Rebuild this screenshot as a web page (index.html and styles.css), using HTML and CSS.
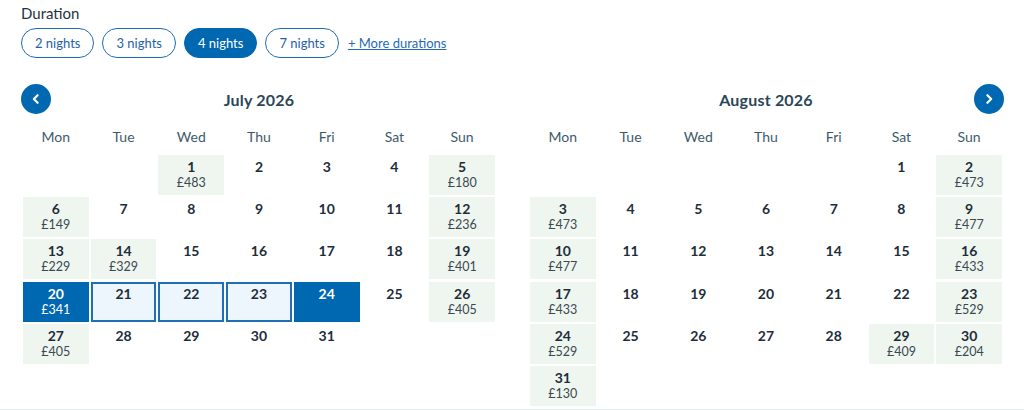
FILE: index.html
```html
<!DOCTYPE html>
<html lang="en">
<head>
<meta charset="utf-8">
<link rel="stylesheet" href="styles.css">
</head>
<body>
<div class="page">
  <section class="duration">
    <div class="label">Duration</div>
    <div class="pills">
      <button class="pill">2 nights</button>
      <button class="pill">3 nights</button>
      <button class="pill active">4 nights</button>
      <button class="pill">7 nights</button>
      <a class="more" href="#">+ More durations</a>
    </div>
  </section>

  <section class="calendars">
    <div class="month">
      <div class="month-head">
        <button class="nav prev" aria-label="Previous month"><svg width="12" height="12" viewBox="0 0 12 12"><path d="M7.6 2.2 L3.8 6 L7.6 9.8" fill="none" stroke="#fff" stroke-width="2.2" stroke-linecap="round" stroke-linejoin="round"/></svg></button>
        <h2 class="title">July 2026</h2>
        <span class="nav-space"></span>
      </div>
      <div class="weekdays"><span>Mon</span><span>Tue</span><span>Wed</span><span>Thu</span><span>Fri</span><span>Sat</span><span>Sun</span></div>
      <div class="grid">
        <div class="cell blank"></div><div class="cell blank"></div>
        <div class="cell price"><b>1</b><i>£483</i></div>
        <div class="cell"><b>2</b></div>
        <div class="cell"><b>3</b></div>
        <div class="cell"><b>4</b></div>
        <div class="cell price"><b>5</b><i>£180</i></div>

        <div class="cell price"><b>6</b><i>£149</i></div>
        <div class="cell"><b>7</b></div>
        <div class="cell"><b>8</b></div>
        <div class="cell"><b>9</b></div>
        <div class="cell"><b>10</b></div>
        <div class="cell"><b>11</b></div>
        <div class="cell price"><b>12</b><i>£236</i></div>

        <div class="cell price"><b>13</b><i>£229</i></div>
        <div class="cell price"><b>14</b><i>£329</i></div>
        <div class="cell"><b>15</b></div>
        <div class="cell"><b>16</b></div>
        <div class="cell"><b>17</b></div>
        <div class="cell"><b>18</b></div>
        <div class="cell price"><b>19</b><i>£401</i></div>

        <div class="cell selected"><b>20</b><i>£341</i></div>
        <div class="cell range"><b>21</b></div>
        <div class="cell range"><b>22</b></div>
        <div class="cell range"><b>23</b></div>
        <div class="cell selected"><b>24</b></div>
        <div class="cell"><b>25</b></div>
        <div class="cell price"><b>26</b><i>£405</i></div>

        <div class="cell price"><b>27</b><i>£405</i></div>
        <div class="cell"><b>28</b></div>
        <div class="cell"><b>29</b></div>
        <div class="cell"><b>30</b></div>
        <div class="cell"><b>31</b></div>
      </div>
    </div>

    <div class="month">
      <div class="month-head">
        <span class="nav-space"></span>
        <h2 class="title">August 2026</h2>
        <button class="nav next" aria-label="Next month"><svg width="12" height="12" viewBox="0 0 12 12"><path d="M4.4 2.2 L8.2 6 L4.4 9.8" fill="none" stroke="#fff" stroke-width="2.2" stroke-linecap="round" stroke-linejoin="round"/></svg></button>
      </div>
      <div class="weekdays"><span>Mon</span><span>Tue</span><span>Wed</span><span>Thu</span><span>Fri</span><span>Sat</span><span>Sun</span></div>
      <div class="grid">
        <div class="cell blank"></div><div class="cell blank"></div><div class="cell blank"></div><div class="cell blank"></div><div class="cell blank"></div>
        <div class="cell"><b>1</b></div>
        <div class="cell price"><b>2</b><i>£473</i></div>

        <div class="cell price"><b>3</b><i>£473</i></div>
        <div class="cell"><b>4</b></div>
        <div class="cell"><b>5</b></div>
        <div class="cell"><b>6</b></div>
        <div class="cell"><b>7</b></div>
        <div class="cell"><b>8</b></div>
        <div class="cell price"><b>9</b><i>£477</i></div>

        <div class="cell price"><b>10</b><i>£477</i></div>
        <div class="cell"><b>11</b></div>
        <div class="cell"><b>12</b></div>
        <div class="cell"><b>13</b></div>
        <div class="cell"><b>14</b></div>
        <div class="cell"><b>15</b></div>
        <div class="cell price"><b>16</b><i>£433</i></div>

        <div class="cell price"><b>17</b><i>£433</i></div>
        <div class="cell"><b>18</b></div>
        <div class="cell"><b>19</b></div>
        <div class="cell"><b>20</b></div>
        <div class="cell"><b>21</b></div>
        <div class="cell"><b>22</b></div>
        <div class="cell price"><b>23</b><i>£529</i></div>

        <div class="cell price"><b>24</b><i>£529</i></div>
        <div class="cell"><b>25</b></div>
        <div class="cell"><b>26</b></div>
        <div class="cell"><b>27</b></div>
        <div class="cell"><b>28</b></div>
        <div class="cell price"><b>29</b><i>£409</i></div>
        <div class="cell price"><b>30</b><i>£204</i></div>

        <div class="cell price"><b>31</b><i>£130</i></div>
      </div>
    </div>
  </section>
</div>
</body>
</html>
```

FILE: styles.css
```css
* { box-sizing: border-box; }

html, body {
  margin: 0;
  padding: 0;
  background: #fff;
}

body {
  font-family: "Lato", "Open Sans", sans-serif;
  color: #1e2d3a;
}

.page {
  width: 1024px;
  height: 410px;
  border-bottom: 1px solid #e3f1f5;
  overflow: hidden;
}

.duration {
  padding: 4px 21px 0 21px;
}

.label {
  font-size: 15px;
  line-height: 18px;
  color: #1f3340;
  margin-bottom: 6px;
}

.pills {
  display: flex;
  align-items: center;
  gap: 8px;
}

.pill {
  height: 30px;
  padding: 0 13px;
  border: 1px solid #1f6cb4;
  border-radius: 15px;
  background: #fff;
  color: #1f62a3;
  font-family: inherit;
  font-size: 13px;
  line-height: 28px;
  cursor: pointer;
}

.pill.active {
  background: #0067b1;
  border-color: #0067b1;
  color: #fff;
}

.more {
  font-size: 13px;
  color: #1f6cb4;
  text-decoration: underline;
  margin-left: 1px;
}

.calendars {
  display: flex;
  gap: 35px;
  padding: 0 22px 0 23px;
  margin-top: 26px;
}

.month {
  width: 472px;
}

.month-head {
  display: grid;
  grid-template-columns: 30px 1fr 30px;
  align-items: center;
  height: 30px;
}

.month-head .prev { margin-left: -2px; }
.month-head .next { margin-left: 2px; }

.title {
  margin: 0;
  text-align: center;
  font-size: 16px;
  font-weight: 700;
  color: #2a4658;
  letter-spacing: 0.2px;
}

.nav {
  width: 30px;
  height: 30px;
  border-radius: 50%;
  border: none;
  background: #0067b1;
  padding: 0;
  display: flex;
  align-items: center;
  justify-content: center;
  cursor: pointer;
}

.weekdays {
  display: grid;
  grid-template-columns: repeat(7, 1fr);
  gap: 2px;
  margin-top: 13px;
  height: 20px;
  line-height: 20px;
  font-size: 14px;
  color: #3d5a6b;
  text-align: center;
}

.grid {
  display: grid;
  grid-template-columns: repeat(7, 1fr);
  grid-auto-rows: 40px;
  gap: 2.2px 2px;
  margin-top: 8px;
}

.cell {
  display: flex;
  flex-direction: column;
  align-items: center;
  padding-top: 4px;
}

.cell b {
  font-size: 14px;
  line-height: 16px;
  font-weight: 700;
  color: #1e2d3a;
}

.cell i {
  font-style: normal;
  font-size: 12.5px;
  line-height: 16px;
  color: #3a4852;
}

.cell.price {
  background: #eff6ef;
}

.cell.selected {
  background: #0067b1;
}

.cell.selected b,
.cell.selected i {
  color: #fff;
}

.cell.range {
  background: #eef6fd;
  border: 2px solid #1d70b8;
  padding-top: 2px;
}
```
